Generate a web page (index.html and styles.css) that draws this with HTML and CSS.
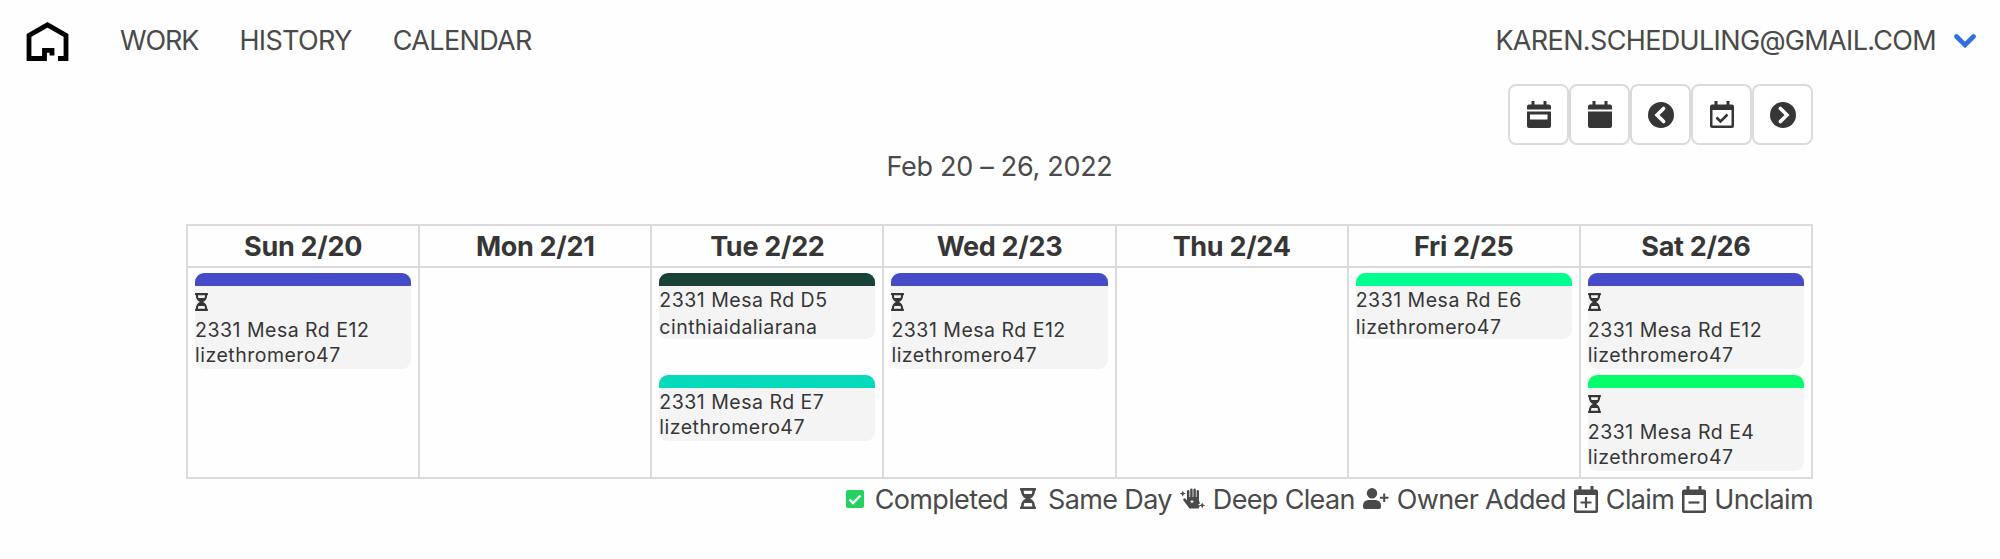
FILE: index.html
```html
<!DOCTYPE html>
<html lang="en">
<head>
    <meta charset="UTF-8">
    <meta name="viewport" content="width=device-width, initial-scale=1.0">
    <title>Calendar</title>
    <link rel="stylesheet" href="styles.css">
</head>
<body>
    <!-- icon shapes shared by the toolbar, events and legend -->
    <svg class="sprite" aria-hidden="true">
        <symbol id="hourglass" viewBox="0 0 384 512" preserveAspectRatio="none">
            <path fill-rule="evenodd" d="M360 0H24C10 0 0 10 0 24v16c0 13 10 24 24 24 0 91 51 167 121 192C75 281 24 357 24 448c-14 0-24 11-24 24v16c0 14 10 24 24 24h336c14 0 24-10 24-24v-16c0-13-10-24-24-24 0-91-51-167-121-192 70-25 121-101 121-192 14 0 24-11 24-24V24c0-14-10-24-24-24zM88 64h208c0 30-6 58-16 80H104C94 122 88 94 88 64zm208 384H88c2-32 6-58 16-80h176c10 22 16 48 16 80z"/>
        </symbol>
        <symbol id="chevron-circle" viewBox="0 0 26 26">
            <circle cx="13" cy="13" r="13"/>
            <path d="M15.600 6.400 9 13l6.600 6.600" fill="none" stroke="#fff" stroke-width="3.600" stroke-linecap="round"/>
        </symbol>
        <symbol id="calendar-outline" viewBox="0 0 24 27">
            <path fill-rule="evenodd" d="M4.500 0h3v3.500h9V0h3v3.500H22a2 2 0 0 1 2 2V25a2 2 0 0 1-2 2H2a2 2 0 0 1-2-2V5.500a2 2 0 0 1 2-2h2.500zM2.500 9v15.500h19V9z"/>
        </symbol>
    </svg>

    <nav class="navbar">
        <a class="logo" href="#">
            <svg viewBox="0 0 42 39">
                <path d="M31.500 36.500H39.500V13.300L21 2.800 2.500 13.300V36.500H18V28.300H25.500V33.500" fill="none" stroke="#000" stroke-width="4.800"/>
            </svg>
        </a>
        <a class="nav-work" href="#">WORK</a>
        <a class="nav-history" href="#">HISTORY</a>
        <a class="nav-calendar" href="#">CALENDAR</a>
        <a class="account" href="#">
            <span>KAREN.SCHEDULING@GMAIL.COM</span>
            <svg class="arrow" viewBox="0 0 22 14"><path d="M2.500 2.500 11 11l8.500-8.500" fill="none" stroke="#2f6fde" stroke-width="4.600" stroke-linecap="round"/></svg>
        </a>
    </nav>

    <main class="container">
        <div class="toolbar">
            <button>
                <svg class="cal" viewBox="0 0 24 27"><path fill-rule="evenodd" d="M4.500 0h3v3.500h9V0h3v3.500H22a2 2 0 0 1 2 2V8.500H0v-3a2 2 0 0 1 2-2h2.500zM0 10.500h24V25a2 2 0 0 1-2 2H2a2 2 0 0 1-2-2zM3 13.500v5h17.500v-5z"/></svg>
            </button>
            <button>
                <svg class="cal" viewBox="0 0 24 27"><path d="M4.500 0h3v3.500h9V0h3v3.500H22a2 2 0 0 1 2 2V8.500H0v-3a2 2 0 0 1 2-2h2.500zM0 10.500h24V25a2 2 0 0 1-2 2H2a2 2 0 0 1-2-2z"/></svg>
            </button>
            <button><svg class="round"><use href="#chevron-circle"/></svg></button>
            <button>
                <svg class="cal" viewBox="0 0 24 27"><use href="#calendar-outline"/><path d="M6.500 16.500l4 4 7-7" fill="none" stroke="#363636" stroke-width="2.600"/></svg>
            </button>
            <button><svg class="round flip"><use href="#chevron-circle"/></svg></button>
        </div>

        <h2 class="range">Feb 20 – 26, 2022</h2>

        <table class="calendar">
            <thead>
                <tr>
                    <th>Sun 2/20</th>
                    <th>Mon 2/21</th>
                    <th>Tue 2/22</th>
                    <th>Wed 2/23</th>
                    <th>Thu 2/24</th>
                    <th>Fri 2/25</th>
                    <th>Sat 2/26</th>
                </tr>
            </thead>
            <tbody>
                <tr>
                    <td>
                        <div class="event same-day indigo">
                            <svg><use href="#hourglass"/></svg>
                            <p>2331 Mesa Rd E12</p>
                            <p>lizethromero47</p>
                        </div>
                    </td>
                    <td></td>
                    <td>
                        <div class="event forest">
                            <p>2331 Mesa Rd D5</p>
                            <p class="cleaner">cinthiaidaliarana</p>
                        </div>
                        <div class="event teal">
                            <p>2331 Mesa Rd E7</p>
                            <p>lizethromero47</p>
                        </div>
                    </td>
                    <td>
                        <div class="event same-day indigo">
                            <svg><use href="#hourglass"/></svg>
                            <p>2331 Mesa Rd E12</p>
                            <p>lizethromero47</p>
                        </div>
                    </td>
                    <td></td>
                    <td>
                        <div class="event mint">
                            <p>2331 Mesa Rd E6</p>
                            <p class="cleaner">lizethromero47</p>
                        </div>
                    </td>
                    <td>
                        <div class="event same-day indigo">
                            <svg><use href="#hourglass"/></svg>
                            <p>2331 Mesa Rd E12</p>
                            <p>lizethromero47</p>
                        </div>
                        <div class="event same-day green">
                            <svg><use href="#hourglass"/></svg>
                            <p>2331 Mesa Rd E4</p>
                            <p>lizethromero47</p>
                        </div>
                    </td>
                </tr>
            </tbody>
        </table>

        <div class="legend">
            <svg class="check" viewBox="0 0 18 18"><rect width="18" height="18" rx="2" fill="#23d160"/><path d="M3.500 9.500 7 13l7.500-7.500" fill="none" stroke="#fff" stroke-width="2.400"/></svg>
            <span>Completed</span>
            <svg class="glass"><use href="#hourglass"/></svg>
            <span>Same Day</span>
            <svg class="hand" viewBox="0 0 25 21">
                <path d="M7 11V3.200a1.200 1.200 0 0 1 2.400 0V9h.8V1.600a1.200 1.200 0 0 1 2.400 0V9h.8V1.600a1.200 1.200 0 0 1 2.400 0V9h.8V3.200a1.200 1.200 0 0 1 2.400 0v9.300l1 3-2 1 2 1.200-1.500 2.800H9.500L3.300 12.300a1.400 1.400 0 0 1 2.200-1.600L7 12.500z"/>
                <path d="M2.800 2.600l.9 2.100 2.100.9-2.100.9-.9 2.100-.9-2.100-2.100-.9 2.100-.9zM22.200 14.400l.9 2.100 2.100.9-2.100.9-.9 2.100-.9-2.100-2.100-.9 2.100-.9z"/>
                <path d="M12 11.500l.6 1.500 1.500.6-1.500.6-.6 1.500-.6-1.500-1.500-.6 1.500-.6z" fill="#fff"/>
            </svg>
            <span>Deep Clean</span>
            <svg class="user" viewBox="0 0 26 21"><circle cx="9" cy="5.200" r="5.200"/><path d="M5.500 12h7a5.500 5.500 0 0 1 5.500 5.500V19a2 2 0 0 1-2 2H2a2 2 0 0 1-2-2v-1.500A5.500 5.500 0 0 1 5.500 12zM20.200 5.500h2v3.300h3.300v2h-3.300v3.300h-2v-3.300h-3.300v-2h3.300z"/></svg>
            <span>Owner Added</span>
            <svg class="cal" viewBox="0 0 24 27"><use href="#calendar-outline"/><path d="M6.500 16.500h11M12 11v11" fill="none" stroke="#4a4a4a" stroke-width="2.200"/></svg>
            <span>Claim</span>
            <svg class="cal" viewBox="0 0 24 27"><use href="#calendar-outline"/><path d="M6.500 16.500h11" fill="none" stroke="#4a4a4a" stroke-width="2.200"/></svg>
            <span class="last">Unclaim</span>
        </div>
    </main>
</body>
</html>
```

FILE: styles.css
```css
* {
    margin: 0;
    padding: 0;
    box-sizing: border-box;
}

body {
    background: #fefefe;
    color: #4a4a4a;
    font-family: 'Inter', sans-serif;
    font-size: 27px;
    line-height: 42px;
}

a {
    color: inherit;
    text-decoration: none;
}

svg {
    display: block;
    fill: currentColor;
    flex: none;
}

.sprite {
    position: absolute;
    width: 0;
    height: 0;
}

/* Navigation */
.navbar {
    display: flex;
    align-items: center;
    height: 84px;
    padding: 0 24px 2px 26px;
    letter-spacing: -0.65px;
    white-space: nowrap;
}

.logo {
    margin-right: 51px;
}

.logo svg {
    width: 43px;
    height: 39px;
}

.nav-work {
    margin-right: 41px;
    letter-spacing: -1.1px;
}

.nav-history {
    margin-right: 41px;
}

.account {
    display: flex;
    align-items: center;
    gap: 18px;
    margin-left: auto;
}

.arrow {
    width: 22px;
    height: 14px;
}

.container {
    width: 1627px;
    margin: 0 0 0 186px;
}

/* Week controls */
.toolbar {
    display: flex;
    justify-content: flex-end;
    height: 61px;
}

.toolbar button {
    display: flex;
    align-items: center;
    justify-content: center;
    width: 61px;
    height: 61px;
    border: 2px solid #dbdbdb;
    border-radius: 8px;
    background: #fff;
    color: #363636;
}

.cal {
    width: 24px;
    height: 27px;
}

.round {
    width: 26px;
    height: 26px;
}

.flip {
    transform: scaleX(-1);
}

.range {
    height: 79px;
    padding-top: 1px;
    font-size: 27px;
    font-weight: 400;
    letter-spacing: -0.3px;
    text-align: center;
}

/* Calendar grid */
.calendar {
    width: 100%;
    table-layout: fixed;
    border-collapse: collapse;
}

.calendar th,
.calendar td {
    border: 2px solid #dbdbdb;
    vertical-align: top;
}

.calendar th {
    height: 42px;
    padding-top: 1px;
    color: #363636;
    font-size: 27px;
    font-weight: 700;
    letter-spacing: -0.3px;
    line-height: 39px;
}

.calendar td {
    height: 210px;
    padding: 5px 7px 0;
}

.event {
    height: 66px;
    margin-bottom: 36px;
    border-radius: 9px;
    background: #f4f4f4;
    color: #363636;
    font-size: 19.5px;
    letter-spacing: 0.5px;
    line-height: 25px;
    overflow: hidden;
}

.event::before {
    content: '';
    display: block;
    height: 13px;
    margin-bottom: 2px;
}

.event .cleaner {
    margin-top: 2px;
}

.same-day {
    height: 96px;
    margin-bottom: 6px;
}

.same-day svg {
    width: 13px;
    height: 18px;
    margin: 7px 0;
}

.indigo::before { background: #464cc7; }
.forest::before { background: #184238; }
.teal::before { background: #05dbbb; }
.mint::before { background: #00ff91; }
.green::before { background: #05ff6b; }

/* Legend */
.legend {
    display: flex;
    align-items: center;
    justify-content: flex-end;
    letter-spacing: -0.65px;
    white-space: nowrap;
}

.legend span {
    margin: 0 8px;
}

.check {
    width: 18px;
    height: 18px;
    margin: 0 3px 3px 0;
}

.glass {
    width: 16px;
    height: 21px;
    margin: 0 4px 3px;
}

.hand {
    width: 25px;
    height: 21px;
    margin-bottom: 3px;
}

.user {
    width: 26px;
    height: 21px;
    margin-bottom: 3px;
}

.legend .cal {
    margin-bottom: 2px;
}

.legend .last {
    margin-right: 0;
}
```
